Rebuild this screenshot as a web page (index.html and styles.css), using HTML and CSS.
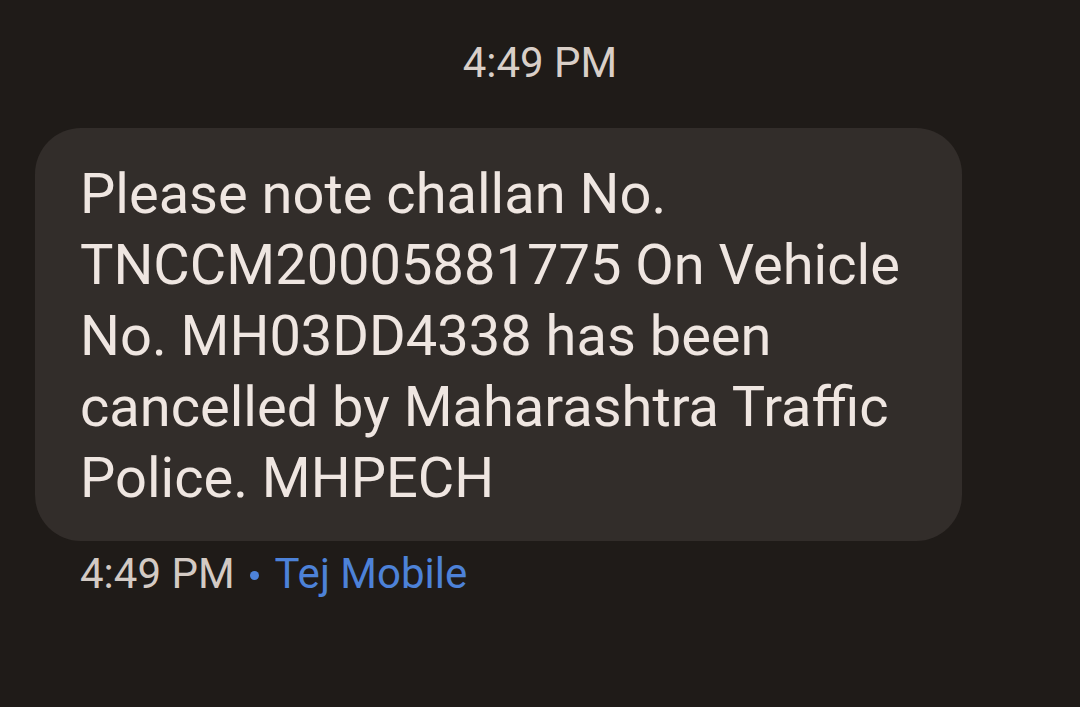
FILE: index.html
```html
<!DOCTYPE html>
<html>
<head>
<meta charset="utf-8">
<link rel="stylesheet" href="styles.css">
</head>
<body>
<div class="thread">
  <div class="day-time">4:49 PM</div>
  <div class="bubble">
    <p class="msg">Please note challan No.<br>TNCCM20005881775 On Vehicle<br>No. MH03DD4338 has been<br>cancelled by Maharashtra Traffic<br>Police. MHPECH</p>
  </div>
  <div class="meta"><span class="meta-time">4:49 PM</span><span class="dot"></span><span class="sim">Tej Mobile</span></div>
</div>
</body>
</html>
```

FILE: styles.css
```css
html, body {
  margin: 0;
  padding: 0;
  background: #1f1b18;
  height: 100%;
}
body {
  font-family: Roboto, "Open Sans", sans-serif;
  width: 1080px;
  height: 707px;
  overflow: hidden;
}
.thread {
  display: flex;
  flex-direction: column;
  padding: 38px 0 0 35px;
}
.day-time {
  align-self: center;
  margin-left: -35px;
  font-size: 42px;
  line-height: 50px;
  color: #d9cfc8;
}
.bubble {
  margin-top: 40px;
  width: 927px;
  box-sizing: border-box;
  background: #322d2a;
  border-radius: 46px;
  padding: 31px 20px 27px 45px;
}
.msg {
  margin: 0;
  font-size: 56px;
  line-height: 71px;
  color: #efe6e1;
}
.meta {
  margin: 8px 0 0 45px;
  font-size: 42px;
  line-height: 50px;
  display: flex;
  align-items: center;
}
.meta-time {
  color: #d3cac4;
}
.dot {
  width: 9px;
  height: 9px;
  border-radius: 50%;
  background: #4d82d8;
  margin: 2px 16px 0 15px;
}
.sim {
  color: #4d82d8;
}
```
